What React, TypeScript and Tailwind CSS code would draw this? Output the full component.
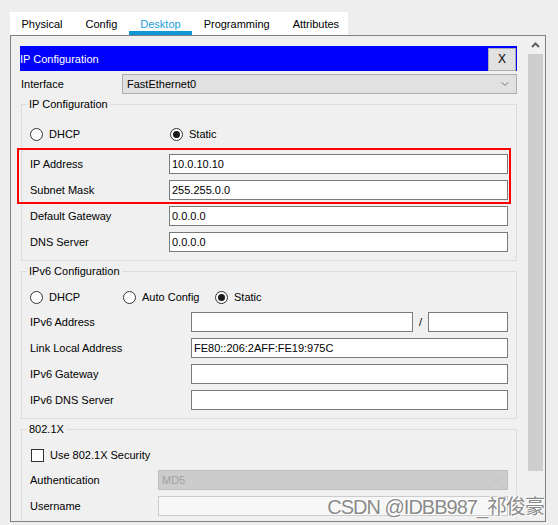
import { ChevronDown } from 'lucide-react'

const tabs = ['Physical', 'Config', 'Desktop', 'Programming', 'Attributes']

function Radio({ checked }: { checked?: boolean }) {
  return (
    <span className="flex h-[13px] w-[13px] shrink-0 items-center justify-center rounded-full border border-[#333333] bg-white">
      {checked && <span className="h-[7px] w-[7px] rounded-full bg-[#1a1a1a]" />}
    </span>
  )
}

function RadioItem({ label, checked, className }: { label: string; checked?: boolean; className?: string }) {
  return (
    <div className={`flex items-center gap-[6px] ${className ?? ''}`}>
      <Radio checked={checked} />
      <span>{label}</span>
    </div>
  )
}

function TextBox({ value, className }: { value?: string; className?: string }) {
  return (
    <div className={`flex h-[20px] items-center border border-[#7a7a7a] bg-white pl-[2px] ${className ?? ''}`}>
      {value}
    </div>
  )
}

function Row({ label, value, labelW }: { label: string; value?: string; labelW: string }) {
  return (
    <div className="flex h-[20px] items-center">
      <span className={labelW}>{label}</span>
      <TextBox value={value} className="flex-1" />
    </div>
  )
}

function Group({ title, children }: { title: string; children: React.ReactNode }) {
  return (
    <fieldset className="ml-[1px] mt-[4px] border border-[#dcdcdc] px-[8px] pb-[8px]">
      <legend className="ml-[-3px] px-[2px] leading-[13px]">{title}</legend>
      {children}
    </fieldset>
  )
}

export default function App() {
  return (
    <div className="relative h-[525px] w-[558px] overflow-hidden bg-[#eeeeee] font-['Liberation_Sans','Noto_Sans_CJK_SC',sans-serif] text-[11px] leading-[13px] text-black">
      {/* tabs */}
      <div className="ml-[10px] mt-[12px] flex h-[23px] w-[338px] bg-white">
        {tabs.map((t) => (
          <div
            key={t}
            className={`flex items-center border-b-[4px] px-[11.5px] pt-[5px] ${
              t === 'Desktop' ? 'border-[#0e97d2] text-[#1d9fdc]' : 'border-transparent'
            }`}
          >
            {t}
          </div>
        ))}
      </div>

      {/* panel */}
      <div className="ml-[10px] flex h-[487px] w-[536px] border border-[#7b8089] bg-[#f0f0f0]">
        <div className="flex-1 overflow-hidden pl-[9px] pr-[11px] pt-[10px]">
          <div className="flex h-[25px] items-center justify-between bg-[#0000ff] pt-[1px] text-white">
            <span>IP Configuration</span>
            <div className="mr-[1px] flex h-[23px] w-[28px] items-center justify-center border border-[#adadad] bg-[#e1e1e1] text-[12px] text-black">
              X
            </div>
          </div>

          <div className="mt-[3px] flex h-[20px] items-center">
            <span className="w-[102px] pl-[1px]">Interface</span>
            <div className="flex h-[20px] flex-1 items-center justify-between border border-[#adadad] bg-[#e1e1e1] pl-[4px] pr-[5px]">
              <span>FastEthernet0</span>
              <ChevronDown size={12} strokeWidth={1.5} className="text-[#555555]" />
            </div>
          </div>

          <Group title="IP Configuration">
            <div className="mt-[13px] flex h-[20px] items-center">
              <RadioItem label="DHCP" className="w-[140px]" />
              <RadioItem label="Static" checked />
            </div>
            <div className="mt-[10px] flex flex-col gap-[6px]">
              <Row label="IP Address" value="10.0.10.10" labelW="w-[139px]" />
              <Row label="Subnet Mask" value="255.255.0.0" labelW="w-[139px]" />
              <Row label="Default Gateway" value="0.0.0.0" labelW="w-[139px]" />
              <Row label="DNS Server" value="0.0.0.0" labelW="w-[139px]" />
            </div>
          </Group>

          <Group title="IPv6 Configuration">
            <div className="mt-[9px] flex h-[20px] items-center">
              <RadioItem label="DHCP" className="w-[93px]" />
              <RadioItem label="Auto Config" className="w-[92px]" />
              <RadioItem label="Static" checked />
            </div>
            <div className="mt-[5px] flex flex-col gap-[6px]">
              <div className="flex h-[20px] items-center">
                <span className="w-[161px]">IPv6 Address</span>
                <TextBox className="w-[222px]" />
                <span className="w-[15px] text-center">/</span>
                <TextBox className="flex-1" />
              </div>
              <Row label="Link Local Address" value="FE80::206:2AFF:FE19:975C" labelW="w-[161px]" />
              <Row label="IPv6 Gateway" labelW="w-[161px]" />
              <Row label="IPv6 DNS Server" labelW="w-[161px]" />
            </div>
          </Group>

          <Group title="802.1X">
            <div className="mt-[9px] flex h-[20px] items-center gap-[6px] pl-[1px]">
              <span className="h-[13px] w-[13px] border border-[#333333] bg-white" />
              <span>Use 802.1X Security</span>
            </div>
            <div className="mt-[5px] flex flex-col gap-[6px]">
              <div className="flex h-[20px] items-center">
                <span className="w-[128px]">Authentication</span>
                <div className="flex h-[20px] flex-1 items-center justify-between border border-[#bfbfbf] bg-[#cccccc] pl-[3px] pr-[5px] text-[#a0a0a0]">
                  <span>MD5</span>
                  <ChevronDown size={12} strokeWidth={1.2} className="text-[#b0b0b0]" />
                </div>
              </div>
              <div className="flex h-[20px] items-center">
                <span className="w-[128px]">Username</span>
                <div className="h-[20px] flex-1 border border-[#cccccc] bg-[#f6f6f6]" />
              </div>
            </div>
          </Group>
        </div>

        {/* scrollbar */}
        <div className="mr-[2px] flex w-[15px] flex-col bg-[#f0f0f0]">
          <div className="flex h-[18px] items-center justify-center">
            <svg width="9" height="6" viewBox="0 0 9 6">
              <polyline points="1,5 4.5,1.5 8,5" fill="none" stroke="#606060" strokeWidth="2" />
            </svg>
          </div>
          <div className="h-[417px] bg-[#cdcdcd]" />
          <div className="flex flex-1 items-end justify-center pb-[5px]">
            <svg width="9" height="6" viewBox="0 0 9 6">
              <polyline points="1,1 4.5,4.5 8,1" fill="none" stroke="#606060" strokeWidth="2" />
            </svg>
          </div>
        </div>
      </div>

      {/* annotation */}
      <div className="absolute left-[17px] top-[148px] h-[56px] w-[494px] border-2 border-[#ff0000]" />

      {/* watermark */}
      <div className="absolute bottom-[7px] right-[14px] text-[20px] leading-[22px] tracking-[-1px] text-[#8a8a8a] [text-shadow:1px_1px_0_#ffffff,-1px_-1px_0_#ffffff]">
        CSDN @IDBB987_祁俊豪
      </div>
    </div>
  )
}
